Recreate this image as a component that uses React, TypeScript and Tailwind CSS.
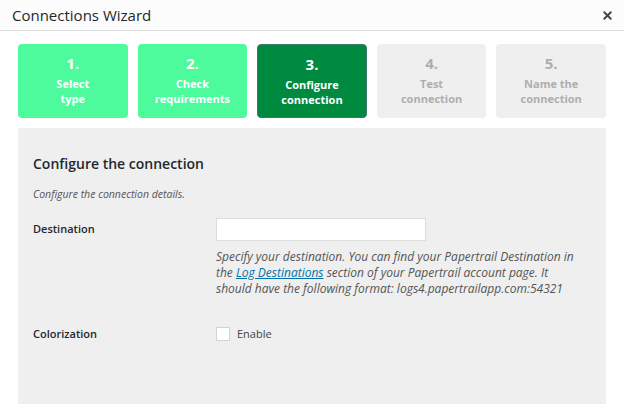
import { X } from "lucide-react";

const steps = [
    { n: "1.", label: ["Select", "type"], state: "done" },
    { n: "2.", label: ["Check", "requirements"], state: "done" },
    { n: "3.", label: ["Configure", "connection"], state: "active" },
    { n: "4.", label: ["Test", "connection"], state: "todo" },
    { n: "5.", label: ["Name the", "connection"], state: "todo" },
];

export default function App() {
    return (
        <div className="w-[624px] h-[404px] bg-white overflow-hidden text-[#23282d]" style={{ fontFamily: '"Open Sans", "Noto Sans", sans-serif' }}>
            {/* Header */}
            <div className="h-[31px] bg-[#fcfcfc] border-b border-[#dddddd] flex items-center justify-between pl-[12px] pr-[10px]">
                <h1 className="text-[15px] font-medium text-[#23282d]">Connections Wizard</h1>
                <X size={13} strokeWidth={3.5} className="text-[#444]" />
            </div>

            {/* Steps */}
            <div className="px-[18px] pt-[13px] flex gap-[10px]">
                {steps.map((s) => (
                    <div
                        key={s.n}
                        className={`w-[110px] h-[74px] rounded-[4px] flex flex-col items-center pt-[9px] font-bold ${
                            s.state === "done"
                                ? "bg-[#4dfb9d] text-white"
                                : s.state === "active"
                                ? "bg-[#008a40] text-white border border-[#3b7a6a]"
                                : "bg-[#efefef] text-[#aeaeae]"
                        }`}
                    >
                        <span className="text-[15px] leading-[20px]">{s.n}</span>
                        <span className="text-[11px] leading-[15px] mt-[3px] text-center">
                            {s.label[0]}
                            <br />
                            {s.label[1]}
                        </span>
                    </div>
                ))}
            </div>

            {/* Panel */}
            <div className="mx-[18px] mt-[10px] h-[300px] bg-[#efefef] pl-[15px] pt-[26px]">
                <h2 className="text-[14px] font-semibold leading-[20px]">Configure the connection</h2>
                <p className="mt-[13px] text-[10.5px] italic text-[#555] leading-[14px]">Configure the connection details.</p>

                <div className="mt-[16px] flex">
                    <div className="w-[183px] pt-[4px] text-[11px] font-semibold">Destination</div>
                    <div>
                        <input type="text" className="w-[210px] h-[23px] bg-white border border-[#dddddd] outline-none" />
                        <p className="mt-[8px] w-[362px] text-[12px] italic text-[#555] leading-[16px]">
                            Specify your destination. You can find your Papertrail Destination in the{" "}
                            <a className="text-[#0073aa] underline">Log Destinations</a> section of your Papertrail account page. It should have the following format: logs4.papertrailapp.com:54321
                        </p>
                    </div>
                </div>

                <div className="mt-[29px] flex items-center">
                    <div className="w-[183px] text-[11px] font-semibold">Colorization</div>
                    <label className="flex items-center gap-[7px] text-[11px] text-[#444]">
                        <span className="w-[14px] h-[14px] bg-white border border-[#d4d4d4] inline-block" />
                        Enable
                    </label>
                </div>
            </div>
        </div>
    );
}
